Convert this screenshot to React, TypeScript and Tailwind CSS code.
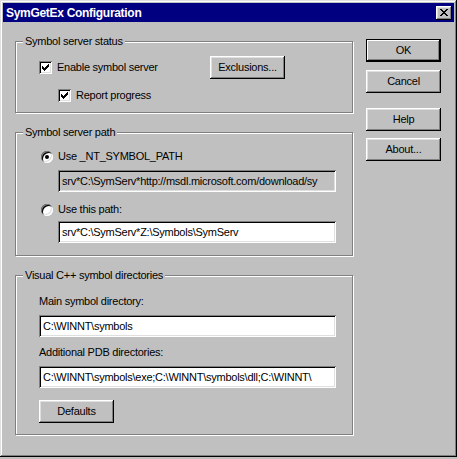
const raised =
  "shadow-[inset_-1px_-1px_0_#000,inset_1px_1px_0_#fff,inset_-2px_-2px_0_#808080,inset_2px_2px_0_#dfdfdf]";
const sunken =
  "shadow-[inset_1px_1px_0_#808080,inset_-1px_-1px_0_#fff,inset_2px_2px_0_#000,inset_-2px_-2px_0_#dfdfdf]";

// classic 7x7 check glyph, one 3px run per column
const checkCols = [2, 3, 4, 3, 2, 1, 0];
// classic 8x7 close glyph
const closeRows = [
  "XX....XX",
  ".XX..XX.",
  "..XXXX..",
  "...XX...",
  "..XXXX..",
  ".XX..XX.",
  "XX....XX",
];

function Checkbox({ label }: { label: string }) {
  return (
    <div className="flex items-center gap-[5px] h-[13px]">
      <div className={`relative w-[13px] h-[13px] bg-white ${sunken}`}>
        <svg width="13" height="13" shapeRendering="crispEdges" className="absolute left-0 top-0">
          {checkCols.map((y, x) => (
            <rect key={x} x={3 + x} y={3 + y} width="1" height="3" fill="#000" />
          ))}
        </svg>
      </div>
      <span>{label}</span>
    </div>
  );
}

function Radio({ label, checked }: { label: string; checked?: boolean }) {
  return (
    <div className="flex items-center gap-[5px] h-[13px]">
      <div className="w-[12px] h-[12px] rounded-full bg-white flex items-center justify-center shadow-[inset_1px_1px_0_#808080,inset_-1px_-1px_0_#fff,inset_2px_2px_0_#000,inset_-2px_-2px_0_#dfdfdf]">
        {checked && <div className="w-[4px] h-[4px] rounded-full bg-black" />}
      </div>
      <span>{label}</span>
    </div>
  );
}

function Button({
  label,
  isDefault,
  className = "",
}: {
  label: string;
  isDefault?: boolean;
  className?: string;
}) {
  return (
    <div
      className={`w-[75px] h-[23px] flex items-center justify-center bg-[#c0c0c0] ${
        isDefault
          ? "border border-black shadow-[inset_-1px_-1px_0_#000,inset_1px_1px_0_#fff,inset_-2px_-2px_0_#808080]"
          : raised
      } ${className}`}
    >
      {label}
    </div>
  );
}

function Field({
  value,
  disabled,
  className = "",
}: {
  value: string;
  disabled?: boolean;
  className?: string;
}) {
  return (
    <div
      className={`h-[22px] flex items-center pl-[4px] pr-[3px] overflow-hidden whitespace-nowrap ${
        disabled ? "bg-[#c0c0c0]" : "bg-white"
      } ${sunken} ${className}`}
    >
      {value}
    </div>
  );
}

function GroupBox({
  label,
  className,
  children,
}: {
  label: string;
  className: string;
  children: React.ReactNode;
}) {
  return (
    <div
      className={`w-[338px] border border-[#808080] shadow-[inset_1px_1px_0_#fff,1px_1px_0_#fff] flex flex-col ${className}`}
    >
      <span className="-mt-[7px] ml-[7px] self-start px-[2px] bg-[#c0c0c0] h-[13px] leading-[13px]">
        {label}
      </span>
      {children}
    </div>
  );
}

export default function App() {
  return (
    <div className="w-[457px] h-[459px] bg-[#c0c0c0] text-[11px] tracking-[-0.25px] text-black font-['Liberation_Sans',Arial,sans-serif]">
      <div className="w-[457px] h-[457px] p-[3px] flex flex-col shadow-[inset_-1px_-1px_0_#000,inset_1px_1px_0_#dfdfdf,inset_-2px_-2px_0_#808080,inset_2px_2px_0_#fff]">
        {/* title bar */}
        <div className="h-[19px] bg-[#000080] flex items-center pl-[3px] pr-[2px]">
          <span className="text-white font-bold text-[12px] tracking-[-0.3px]">SymGetEx Configuration</span>
          <div className={`ml-auto w-[16px] h-[14px] bg-[#c0c0c0] flex items-center justify-center ${raised}`}>
            <svg width="8" height="7" shapeRendering="crispEdges">
              {closeRows.map((row, y) =>
                row.split("").map((c, x) =>
                  c === "X" ? <rect key={`${x}-${y}`} x={x} y={y} width="1" height="1" fill="#000" /> : null
                )
              )}
            </svg>
          </div>
        </div>

        <div className="flex">
          {/* left column */}
          <div className="pl-[12px] pt-[19px] flex flex-col">
            <GroupBox label="Symbol server status" className="h-[72px]">
              <div className="mt-[8px] h-[23px] flex items-center pl-[23px] pr-[67px]">
                <Checkbox label="Enable symbol server" />
                <Button label="Exclusions..." className="ml-auto" />
              </div>
              <div className="mt-[10px] pl-[42px]">
                <Checkbox label="Report progress" />
              </div>
            </GroupBox>

            <GroupBox label="Symbol server path" className="h-[124px] mt-[19px]">
              <div className="mt-[11px] pl-[25px]">
                <Radio label="Use _NT_SYMBOL_PATH" checked />
              </div>
              <Field
                disabled
                className="mt-[7px] ml-[42px] w-[278px]"
                value="srv*C:\SymServ*http://msdl.microsoft.com/download/sy"
              />
              <div className="mt-[11px] pl-[25px]">
                <Radio label="Use this path:" />
              </div>
              <Field className="mt-[5px] ml-[42px] w-[278px]" value="srv*C:\SymServ*Z:\Symbols\SymServ" />
            </GroupBox>

            <GroupBox label="Visual C++ symbol directories" className="h-[160px] mt-[19px]">
              <div className="pl-[23px] flex flex-col">
                <span className="mt-[13px] h-[13px] leading-[13px]">Main symbol directory:</span>
                <Field className="mt-[7px] w-[297px]" value="C:\WINNT\symbols" />
                <span className="mt-[9px] h-[13px] leading-[13px]">Additional PDB directories:</span>
                <Field
                  className="mt-[7px] w-[297px]"
                  value="C:\WINNT\symbols\exe;C:\WINNT\symbols\dll;C:\WINNT\"
                />
                <Button label="Defaults" className="mt-[12px]" />
              </div>
            </GroupBox>
          </div>

          {/* right column */}
          <div className="ml-[13px] pt-[17px] flex flex-col">
            <Button label="OK" isDefault />
            <Button label="Cancel" className="mt-[8px]" />
            <Button label="Help" className="mt-[15px]" />
            <Button label="About..." className="mt-[7px]" />
          </div>
        </div>
      </div>
    </div>
  );
}
